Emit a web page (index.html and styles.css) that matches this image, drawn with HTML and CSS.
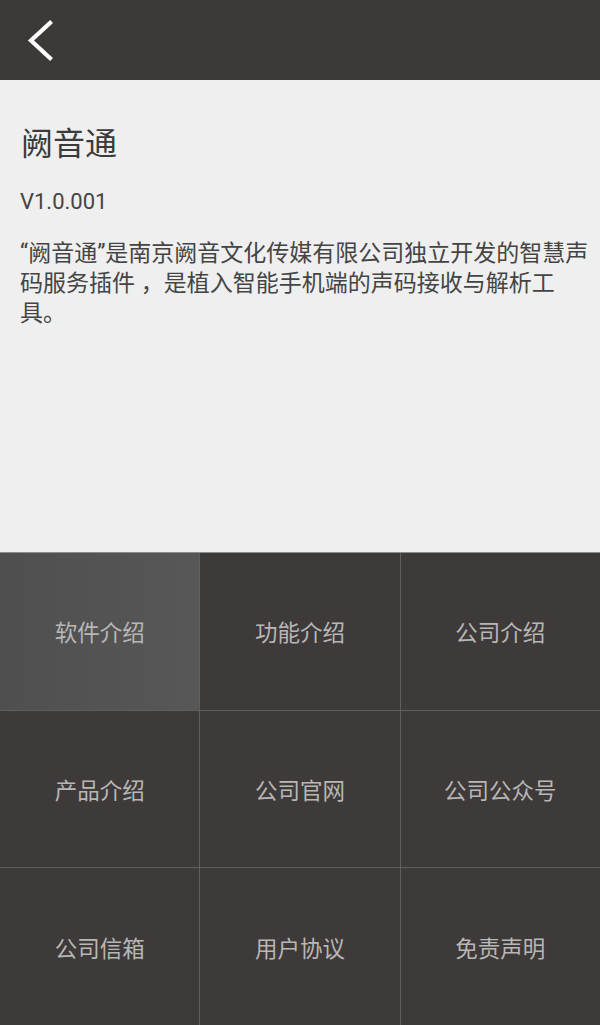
FILE: index.html
```html
<!DOCTYPE html>
<html lang="zh-CN">
<head>
<meta charset="utf-8">
<title>阙音通</title>
<link rel="stylesheet" href="styles.css">
</head>
<body>
<div class="page">
  <header class="topbar">
    <svg class="back" width="80" height="80" viewBox="0 0 80 80" aria-hidden="true">
      <polyline points="50,23 31,40.5 50,58" fill="none" stroke="#ffffff" stroke-width="4.2" stroke-linecap="square" stroke-linejoin="miter"/>
    </svg>
  </header>
  <main class="content">
    <h1 class="title">阙音通</h1>
    <p class="version">V1.0.001</p>
    <p class="desc">“阙音通”是南京阙音文化传媒有限公司独立开发的智慧声码服务插件&nbsp;，是植入智能手机端的声码接收与解析工具。</p>
  </main>
  <nav class="menu">
    <div class="cell active">软件介绍</div>
    <div class="cell">功能介绍</div>
    <div class="cell">公司介绍</div>
    <div class="cell">产品介绍</div>
    <div class="cell">公司官网</div>
    <div class="cell">公司公众号</div>
    <div class="cell">公司信箱</div>
    <div class="cell">用户协议</div>
    <div class="cell">免责声明</div>
  </nav>
</div>
</body>
</html>
```
FILE: styles.css
```css
html, body {
  margin: 0;
  padding: 0;
  height: 100%;
}
body {
  font-family: Roboto, "Noto Sans CJK SC", sans-serif;
  background: #efefef;
}
.page {
  height: 1025px;
  display: flex;
  flex-direction: column;
  overflow: hidden;
}
.topbar {
  height: 80px;
  flex: 0 0 80px;
  background: #3d3938;
  display: flex;
  align-items: center;
}
.back {
  display: block;
}
.content {
  flex: 1 1 auto;
  background: #efefef;
  padding: 44px 3px 0 20px;
  box-sizing: border-box;
}
.title {
  margin: 0 0 0 1px;
  font-size: 32px;
  line-height: 40px;
  font-weight: normal;
  color: #3b3b3b;
}
.version {
  margin: 22.5px 0 0 0;
  font-size: 22px;
  line-height: 30px;
  color: #444444;
}
.desc {
  margin: 22px 0 0 0;
  font-size: 23px;
  line-height: 30px;
  color: #444444;
}
.menu {
  flex: 0 0 473px;
  height: 473px;
  box-sizing: border-box;
  border-top: 1px solid #8e8c8b;
  background: #625e5d;
  display: grid;
  grid-template-columns: 1fr 1fr 1fr;
  grid-template-rows: 1fr 1fr 1fr;
  gap: 1px;
}
.cell {
  background: #3e3a39;
  color: #b7b7b7;
  font-size: 22.5px;
  display: flex;
  align-items: center;
  justify-content: center;
}
.cell.active {
  background: linear-gradient(to right, #4f4f4f, #575757);
}
```
